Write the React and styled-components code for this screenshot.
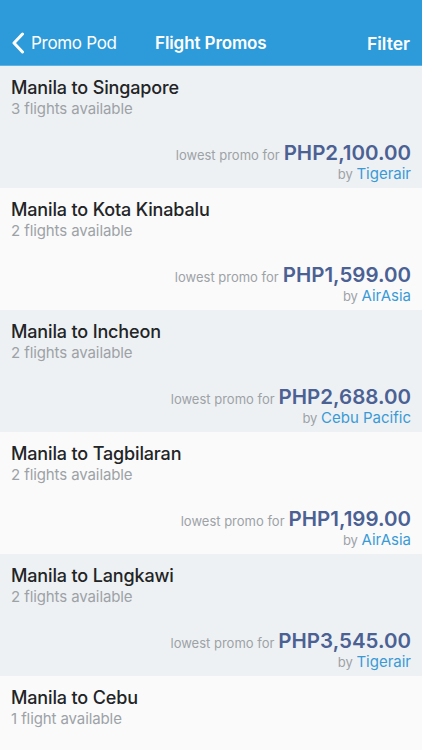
import React from 'react';
import styled, { createGlobalStyle } from 'styled-components';

const GlobalStyle = createGlobalStyle`
  html, body {
    margin: 0;
    padding: 0;
    background: #fafafa;
  }
  body {
    font-family: Inter, "Liberation Sans", Arial, sans-serif;
    -webkit-font-smoothing: antialiased;
  }
`;

const promos = [
  { route: 'Manila to Singapore', flights: 3, price: 'PHP2,100.00', airline: 'Tigerair' },
  { route: 'Manila to Kota Kinabalu', flights: 2, price: 'PHP1,599.00', airline: 'AirAsia' },
  { route: 'Manila to Incheon', flights: 2, price: 'PHP2,688.00', airline: 'Cebu Pacific' },
  { route: 'Manila to Tagbilaran', flights: 2, price: 'PHP1,199.00', airline: 'AirAsia' },
  { route: 'Manila to Langkawi', flights: 2, price: 'PHP3,545.00', airline: 'Tigerair' },
  { route: 'Manila to Cebu', flights: 1, price: null, airline: null },
];

const App = () => {
  return (
    <>
      <GlobalStyle />
      <Page>
        <Header>
          <StatusBar />
          <NavBar>
            <BackButton>
              <svg width="14" height="22" viewBox="0 0 14 22">
                <path d="M11.5 2 L3 11 L11.5 20" fill="none" stroke="#fff" strokeWidth="3" strokeLinecap="round" strokeLinejoin="round" />
              </svg>
              <span>Promo Pod</span>
            </BackButton>
            <NavTitle>Flight Promos</NavTitle>
            <NavAction>Filter</NavAction>
          </NavBar>
        </Header>

        <List>
          {promos.map((p, i) => (
            <Row key={p.route} $alt={i % 2 === 0}>
              <Route>{p.route}</Route>
              <Count>
                {p.flights} {p.flights === 1 ? 'flight' : 'flights'} available
              </Count>
              {p.price && (
                <PriceBlock>
                  <PriceLine>
                    <Label>lowest promo for</Label>
                    <Price>{p.price}</Price>
                  </PriceLine>
                  <ByLine>
                    by <Airline>{p.airline}</Airline>
                  </ByLine>
                </PriceBlock>
              )}
            </Row>
          ))}
        </List>
      </Page>
    </>
  );
};

const Page = styled.div`
  width: 422px;
  height: 750px;
  overflow: hidden;
  background: #fafafa;
`;

const Header = styled.header`
  background: #2d9bd9;
  border-bottom: 1px solid #5fb3e2;
`;

const StatusBar = styled.div`
  height: 20px;
`;

const NavBar = styled.nav`
  height: 44px;
  display: flex;
  align-items: center;
  justify-content: space-between;
  padding: 1px 12px 0 11px;
  color: #fff;
  position: relative;
`;

const BackButton = styled.div`
  display: flex;
  align-items: center;
  gap: 6px;
  font-size: 17px;
  font-weight: 400;
  letter-spacing: -0.3px;
`;

const NavTitle = styled.div`
  font-size: 17px;
  font-weight: 600;
  letter-spacing: -0.1px;
  position: absolute;
  left: 155px;
`;

const NavAction = styled.div`
  font-size: 17.5px;
  font-weight: 600;
  letter-spacing: 0;
`;

const List = styled.div`
  display: flex;
  flex-direction: column;
`;

const Row = styled.div`
  height: 122px;
  box-sizing: border-box;
  padding: 10px 11px 0 11px;
  background: ${(p) => (p.$alt ? '#eef1f3' : '#fafafa')};
  display: flex;
  flex-direction: column;
`;

const Route = styled.div`
  font-size: 18px;
  font-weight: 500;
  color: #222426;
  letter-spacing: -0.15px;
  line-height: 24px;
`;

const Count = styled.div`
  font-size: 15px;
  color: #9da2a7;
  line-height: 18px;
  letter-spacing: -0.1px;
`;

const PriceBlock = styled.div`
  margin-top: 23px;
  display: flex;
  flex-direction: column;
  align-items: flex-end;
`;

const PriceLine = styled.div`
  display: flex;
  align-items: baseline;
  gap: 4px;
`;

const Label = styled.span`
  font-size: 13px;
  color: #9da2a7;
`;

const Price = styled.span`
  font-size: 20.5px;
  font-weight: 600;
  color: #4b6194;
  letter-spacing: 0;
  line-height: 24px;
`;

const ByLine = styled.div`
  font-size: 13px;
  color: #9da2a7;
  line-height: 18px;
`;

const Airline = styled.span`
  font-size: 15px;
  color: #3a9ad6;
`;

export default App;
